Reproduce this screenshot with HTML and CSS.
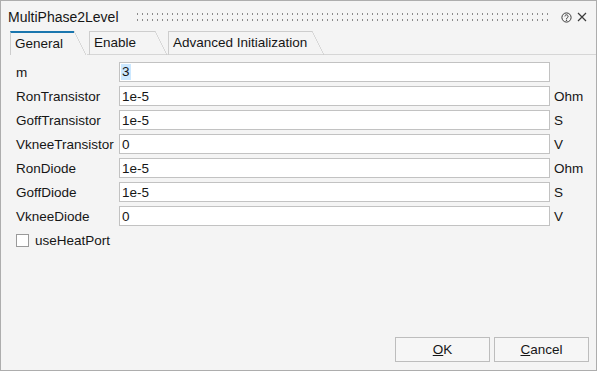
FILE: index.html
```html
<!DOCTYPE html>
<html>
<head>
<meta charset="utf-8">
<link rel="stylesheet" href="styles.css">
</head>
<body>
<div class="window">
  <header class="titlebar">
    <span class="title">MultiPhase2Level</span>
    <span class="grip"></span>
    <svg class="help" width="11" height="11" viewBox="0 0 11 11"><circle cx="5.5" cy="5.5" r="4.6" fill="none" stroke="#3a3a3a" stroke-width="1"/><path d="M3.9 4.4a1.6 1.6 0 1 1 2.4 1.4c-.5.3-.8.5-.8 1.2" fill="none" stroke="#3a3a3a" stroke-width="1"/><circle cx="5.5" cy="8.2" r=".7" fill="#3a3a3a"/></svg>
    <svg class="close" width="10" height="10" viewBox="0 0 10 10"><path d="M1 1L9 9M9 1L1 9" stroke="#3a3a3a" stroke-width="1.2"/></svg>
  </header>
  <nav class="tabs">
    <div class="tab tab-general active">General</div>
    <div class="tab tab-enable">Enable</div>
    <div class="tab tab-adv">Advanced Initialization</div>
  </nav>
  <div class="form">
    <label class="lbl">m</label><div class="field"><span class="sel">3</span></div><span class="unit"></span>
    <label class="lbl">RonTransistor</label><div class="field">1e-5</div><span class="unit">Ohm</span>
    <label class="lbl">GoffTransistor</label><div class="field">1e-5</div><span class="unit">S</span>
    <label class="lbl">VkneeTransistor</label><div class="field">0</div><span class="unit">V</span>
    <label class="lbl">RonDiode</label><div class="field">1e-5</div><span class="unit">Ohm</span>
    <label class="lbl">GoffDiode</label><div class="field">1e-5</div><span class="unit">S</span>
    <label class="lbl">VkneeDiode</label><div class="field">0</div><span class="unit">V</span>
    <div class="check-row"><span class="checkbox"></span><span>useHeatPort</span></div>
  </div>
  <footer class="buttons">
    <button class="btn"><u>O</u>K</button>
    <button class="btn"><u>C</u>ancel</button>
  </footer>
</div>
</body>
</html>
```
FILE: styles.css
```css
html, body {
  margin: 0;
  padding: 0;
  background: #f4f4f4;
}

.window {
  width: 597px;
  height: 371px;
  box-sizing: border-box;
  border: 1px solid #adadad;
  background: #f4f4f4;
  display: flex;
  flex-direction: column;
  font-family: "Liberation Sans", Arial, sans-serif;
  font-size: 13.5px;
  color: #161616;
}

.titlebar {
  height: 30px;
  display: flex;
  align-items: center;
  padding: 0 9px 0 7px;
}

.title {
  font-size: 14px;
  margin-right: 16px;
  padding-top: 2px;
}

.grip {
  flex: 1;
  height: 12px;
  margin-top: 2px;
  background-image: radial-gradient(circle, #8a8a8a 0.8px, transparent 1.1px);
  background-size: 5px 6px;
  background-position: 0 0;
}

.help {
  margin-left: 9px;
  margin-top: 2px;
}

.close {
  margin-left: 5px;
  margin-top: 2px;
}

.tabs {
  height: 24px;
  display: flex;
  margin-left: 9px;
  background-image: linear-gradient(#d6d6d6, #d6d6d6);
  background-repeat: no-repeat;
  background-size: 100% 1px;
  background-position: 77px 100%;
}

.tab {
  position: relative;
  box-sizing: border-box;
  height: 100%;
  border-left: 1px solid #cdcdcd;
  border-top: 1px solid #cdcdcd;
  padding: 0 0 2px 4px;
  display: flex;
  align-items: center;
  white-space: nowrap;
}

.tab::after {
  content: "";
  position: absolute;
  left: 100%;
  top: -1px;
  width: 12px;
  height: calc(100% + 1px);
  background: linear-gradient(to top right, transparent calc(50% - 0.6px), #c8c8c8 50%, transparent calc(50% + 0.6px));
}

.tab.active {
  border-top: 2px solid #1a76ae;
  padding-bottom: 1px;
}

.tab.active::after {
  top: -2px;
  height: calc(100% + 2px);
}

.tab-general { width: 64px; margin-right: 15px; }
.tab-enable { width: 66px; margin-right: 13px; }
.tab-adv { width: 144px; }

.form {
  display: grid;
  grid-template-columns: 103px 431px auto;
  grid-auto-rows: 20px;
  row-gap: 4px;
  align-items: center;
  padding: 7px 0 0 15px;
}

.lbl {
  white-space: nowrap;
}

.field {
  box-sizing: border-box;
  height: 20px;
  border: 1px solid #c2c2c2;
  background: #ffffff;
  padding: 0 0 0 2px;
  display: flex;
  align-items: center;
}

.sel {
  background: #cce8ff;
  padding: 0 1px;
  margin-left: -1px;
  line-height: 16px;
}

.unit {
  padding-left: 4px;
}

.check-row {
  grid-column: 1 / -1;
  display: flex;
  align-items: center;
  gap: 6px;
}

.checkbox {
  box-sizing: border-box;
  width: 13px;
  height: 13px;
  border: 1px solid #9a9a9a;
  background: #ffffff;
}

.buttons {
  margin-top: auto;
  display: flex;
  justify-content: flex-end;
  gap: 4px;
  padding: 0 7px 8px 0;
}

.btn {
  box-sizing: border-box;
  width: 95px;
  height: 25px;
  border: 1px solid #bdbdbd;
  border-radius: 0;
  background: #f6f6f6;
  font-family: "Liberation Sans", Arial, sans-serif;
  font-size: 13.5px;
  color: #161616;
  padding: 0;
}
```
